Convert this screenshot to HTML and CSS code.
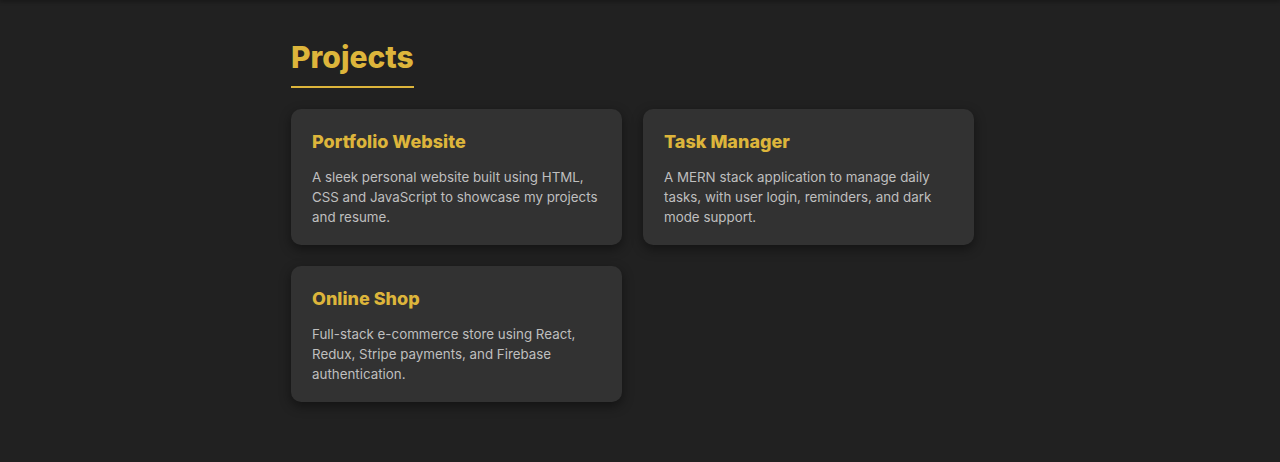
FILE: index.html
```html
<!DOCTYPE html>
<html lang="en">
<head>
<meta charset="utf-8">
<title>Projects</title>
<link rel="stylesheet" href="styles.css">
</head>
<body>
<div class="topbar"></div>
<section class="projects">
  <h2 class="section-title">Projects</h2>
  <div class="grid">
    <article class="card">
      <h3 class="card-title">Portfolio Website</h3>
      <p class="card-text">A sleek personal website built using HTML, CSS and JavaScript to showcase my projects and resume.</p>
    </article>
    <article class="card">
      <h3 class="card-title">Task Manager</h3>
      <p class="card-text">A MERN stack application to manage daily tasks, with user login, reminders, and dark mode support.</p>
    </article>
    <article class="card">
      <h3 class="card-title">Online Shop</h3>
      <p class="card-text">Full-stack e-commerce store using React, Redux, Stripe payments, and Firebase authentication.</p>
    </article>
  </div>
</section>
</body>
</html>
```

FILE: styles.css
```css
* { box-sizing: border-box; }
html, body { margin: 0; padding: 0; }
body {
  background: #212121;
  font-family: Inter, "Noto Sans", sans-serif;
  color: #c4c4c4;
  min-height: 462px;
  overflow: hidden;
}
.topbar {
  height: 0;
  box-shadow: 0 0 4px 1px rgba(0,0,0,0.55);
}
.projects {
  width: 698px;
  margin: 0 auto;
  padding: 38px 0 0 0;
}
.section-title {
  display: inline-block;
  margin: 0 0 21px 0;
  padding-bottom: 10px;
  border-bottom: 2px solid #ddb53b;
  color: #ddb53b;
  font-size: 30px;
  font-weight: 800;
  line-height: 38px;
}
.grid {
  display: grid;
  grid-template-columns: 331px 331px;
  column-gap: 21px;
  row-gap: 21px;
}
.card {
  background: #323232;
  border-radius: 10px;
  padding: 21px 21px 20px 21px;
  height: 136px;
  box-shadow: 0 4px 12px rgba(0,0,0,0.45);
}
.card-title {
  margin: 0 0 13px 0;
  color: #ddb53b;
  font-size: 18px;
  font-weight: 800;
  line-height: 24px;
}
.card-text {
  margin: 0;
  font-size: 13.35px;
  line-height: 20px;
  color: #bfbfbf;
}
```
